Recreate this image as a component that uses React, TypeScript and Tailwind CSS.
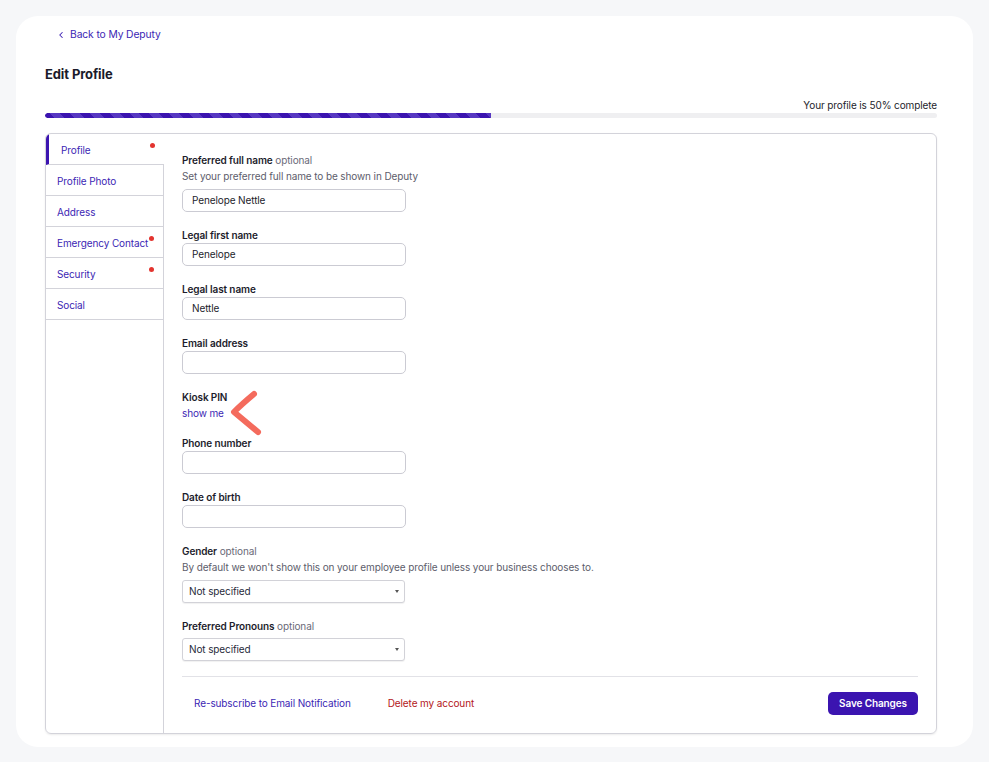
import { ChevronLeft } from "lucide-react";

const navItems = [
  { label: "Profile", dot: true, active: true },
  { label: "Profile Photo", dot: false },
  { label: "Address", dot: false },
  { label: "Emergency Contact", dot: true },
  { label: "Security", dot: true },
  { label: "Social", dot: false },
];

function Field({
  label,
  optional,
  help,
  value,
}: {
  label: string;
  optional?: boolean;
  help?: string;
  value?: string;
}) {
  return (
    <div className="mb-[15px]">
      <div className="text-[10px] leading-[16px] font-semibold text-[#1d1d2c]">
        {label}
        {optional && <span className="font-normal text-[#6a6a78]"> optional</span>}
      </div>
      {help && (
        <div className="text-[10px] leading-[16px] text-[#5d5d6b] mb-[5px]">{help}</div>
      )}
      <div className="w-[224px] h-[23px] rounded-[5px] border border-[#cbcbd3] bg-white flex items-center px-[9px] text-[10px] text-[#1d1d2c]">
        {value}
      </div>
    </div>
  );
}

function SelectField({
  label,
  help,
}: {
  label: string;
  help?: string;
}) {
  return (
    <div className="mb-[15px]">
      <div
        className={
          help
            ? "text-[10px] leading-[16px] font-semibold text-[#1d1d2c]"
            : "text-[10px] leading-[16px] font-semibold text-[#1d1d2c] mb-[4px]"
        }
      >
        {label}
        <span className="font-normal text-[#6a6a78]"> optional</span>
      </div>
      {help && (
        <div className="text-[10px] leading-[16px] text-[#5d5d6b] mb-[5px]">{help}</div>
      )}
      <div className="w-[223px] h-[23px] rounded-[3px] border border-[#d2d2d8] shadow-[0_1px_1px_rgba(0,0,0,0.06)] bg-white flex items-center justify-between pl-[6px] pr-[5px] text-[10px] text-[#1f2a3a]">
        <span>Not specified</span>
        <svg width="4" height="3" viewBox="0 0 4 3">
          <path d="M0 0 L4 0 L2 3 Z" fill="#555" />
        </svg>
      </div>
    </div>
  );
}

export default function App() {
  return (
    <div
      className="min-h-screen bg-[#f6f7f9] p-[16px] tracking-[-0.007em]"
      style={{ fontFamily: "Inter, 'Noto Sans', sans-serif" }}
    >
      <div className="bg-white rounded-[22px] pl-[29px] pr-[36px] pt-[11px] pb-[13px]">
        <a className="flex items-center ml-[11px] h-[16px] text-[10.3px] text-[#3c1fb4]">
          <ChevronLeft className="w-[10px] h-[10px] mr-[4px]" strokeWidth={2.5} />
          Back to My Deputy
        </a>
        <h1 className="mt-[21px] text-[13px] leading-[20px] font-bold text-[#1b1b2b]">
          Edit Profile
        </h1>
        <div className="mt-[14px] text-right text-[10px] leading-[14px] text-[#1d1d2c]">
          Your profile is 50% complete
        </div>
        <div className="mt-[1px] h-[5px] rounded-full bg-[#efeff1] overflow-hidden">
          <div className="h-full w-1/2 rounded-l-full bg-[repeating-linear-gradient(45deg,#3b14b0_0px,#3b14b0_7px,#5738c2_7px,#5738c2_14px)]" />
        </div>

        <div className="mt-[15px] flex rounded-[6px] border border-[#d3d3da] shadow-[0_1px_2px_rgba(0,0,0,0.08)] overflow-hidden">
          <div className="w-[118px] flex flex-col shrink-0">
            {navItems.map((item) => (
              <div
                key={item.label}
                className={
                  item.active
                    ? "relative h-[31px] flex items-center pt-[2px] border-b border-[#d3d3da] border-l-[3px] border-l-[#3b14b0] pl-[12px] text-[10px] text-[#3c1fb4]"
                    : "relative h-[31px] flex items-center pt-[2px] border-b border-r border-[#d3d3da] pl-[11px] text-[10px] text-[#3c1fb4]"
                }
              >
                {item.label}
                {item.dot && (
                  <span className="absolute top-[9px] right-[9px] w-[5px] h-[5px] rounded-full bg-[#e3342f]" />
                )}
              </div>
            ))}
            <div className="flex-1 border-r border-[#d3d3da]" />
          </div>

          <div className="flex-1 pt-[18px] px-[18px] pb-[18px]">
            <Field
              label="Preferred full name"
              optional
              help="Set your preferred full name to be shown in Deputy"
              value="Penelope Nettle"
            />
            <Field label="Legal first name" value="Penelope" />
            <Field label="Legal last name" value="Nettle" />
            <Field label="Email address" />

            <div className="relative mb-[14px]">
              <div className="text-[10px] leading-[16px] font-semibold text-[#1d1d2c]">
                Kiosk PIN
              </div>
              <a className="block text-[10px] leading-[16px] text-[#3c1fb4]">show me</a>
              <svg
                className="absolute left-[44px] top-[0px]"
                width="40"
                height="50"
                viewBox="0 0 40 50"
              >
                <path
                  d="M28 5 Q16 15 8 23 Q20 33 32 43"
                  fill="none"
                  stroke="#f46b5d"
                  strokeWidth="6"
                  strokeLinecap="round"
                  strokeLinejoin="round"
                />
              </svg>
            </div>

            <Field label="Phone number" />
            <Field label="Date of birth" />
            <SelectField
              label="Gender"
              help="By default we won't show this on your employee profile unless your business chooses to."
            />
            <SelectField label="Preferred Pronouns" />

            <div className="border-t border-[#e2e2e7] pt-[15px] flex items-center justify-between">
              <div className="flex items-center ml-[12px] gap-[37px] text-[10px]">
                <a className="text-[#3c1fb4]">Re-subscribe to Email Notification</a>
                <a className="text-[#b3151b]">Delete my account</a>
              </div>
              <button className="w-[90px] h-[23px] rounded-[5px] bg-[#3b14b0] text-white text-[10px] font-semibold">
                Save Changes
              </button>
            </div>
          </div>
        </div>
      </div>
    </div>
  );
}
